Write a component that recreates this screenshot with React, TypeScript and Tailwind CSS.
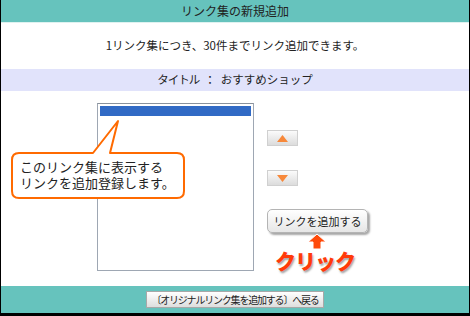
import React from 'react';

const font = { fontFamily: '"Noto Sans CJK JP", "Noto Sans", sans-serif' };

const ArrowButton = ({ dir }: { dir: 'up' | 'down' }) => (
  <button className="w-[31px] h-[16px] flex items-center justify-center border border-[#d0d0d0] bg-gradient-to-b from-[#fbfbfb] to-[#dcdcdc]">
    <svg width="11" height="7" viewBox="0 0 11 7">
      {dir === 'up' ? (
        <polygon points="5.5,0 11,7 0,7" fill="#f7883a" />
      ) : (
        <polygon points="0,0 11,0 5.5,7" fill="#f7883a" />
      )}
    </svg>
  </button>
);

export default function App() {
  return (
    <div
      className="relative w-[470px] h-[316px] flex flex-col bg-white border-l border-r border-b-[3px] border-black text-[#222]"
      style={font}
    >
      <div className="h-[23px] shrink-0 flex items-center justify-center bg-[#66c3bd] border-b border-[#dff2f0] text-[12px]">
        リンク集の新規追加
      </div>

      <div className="h-[46px] shrink-0 flex items-center justify-center text-[11.5px]">
        1リンク集につき、30件までリンク追加できます。
      </div>

      <div className="h-[22px] shrink-0 flex items-center justify-center bg-[#e1e3fb] text-[11.5px] gap-[5px]">
        <span className="tracking-[-1px]">タイトル</span>
        <span>：</span>
        <span>おすすめショップ</span>
      </div>

      <div className="h-[195px] shrink-0 flex pl-[96px] pt-[12px]">
        <div className="w-[157px] h-[168px] border border-[#9ea7b3] border-t-[#8a929c] p-[2px] bg-white">
          <div className="h-[10px] bg-[#316ac5]" />
        </div>

        <div className="ml-[13px] flex flex-col items-start pt-[27px]">
          <ArrowButton dir="up" />
          <div className="mt-[24px]">
            <ArrowButton dir="down" />
          </div>
          <button className="mt-[23px] w-[101px] h-[24px] rounded-[5px] border border-[#b4b4b4] bg-gradient-to-b from-white to-[#e6e6e6] shadow-[2px_2px_2px_rgba(0,0,0,0.35)] text-[11px] text-[#222] flex items-center justify-center whitespace-nowrap">
            リンクを追加する
          </button>
          <div className="ml-[40px]">
            <svg width="20" height="17" viewBox="0 0 20 17">
              <polygon
                points="10,1 19,9 14,9 14,16 6,16 6,9 1,9"
                fill="#ff4a0a"
                stroke="white"
                strokeWidth="1"
                strokeLinejoin="round"
              />
            </svg>
          </div>
          <div
            className="ml-[8px] -mt-[2px] text-[21px] font-black leading-[24px] text-[#ff3a0a] tracking-[-1px] whitespace-nowrap"
            style={{
              WebkitTextStroke: '4px white',
              paintOrder: 'stroke fill',
              textShadow: '1px 2px 2px rgba(0,0,0,0.35)',
            }}
          >
            クリック
          </div>
        </div>
      </div>

      <div className="flex-1 flex items-center justify-center bg-[#66c3bd]">
        <button className="w-[178px] h-[17px] border border-[#a8a8a8] bg-gradient-to-b from-white to-[#dedede] text-[10px] tracking-[-1.2px] leading-none text-[#222] flex items-center justify-center whitespace-nowrap">
          〔オリジナルリンク集を追加する〕へ戻る
        </button>
      </div>

      {/* callout annotation */}
      <svg
        className="absolute left-[9px] top-[118px]"
        width="178"
        height="84"
        viewBox="0 0 178 84"
      >
        <path
          d="M 9,35 H 83 L 108,3 L 100,35 H 167 Q 174,35 174,42 V 73 Q 174,80 167,80 H 9 Q 2,80 2,73 V 42 Q 2,35 9,35 Z"
          fill="white"
          stroke="#ff6a00"
          strokeWidth="2"
          strokeLinejoin="round"
        />
      </svg>
      <div className="absolute left-[19px] top-[159px] text-[13px] leading-[16px] text-[#222] whitespace-nowrap">
        このリンク集に表示する
        <br />
        リンクを追加登録します。
      </div>
    </div>
  );
}
